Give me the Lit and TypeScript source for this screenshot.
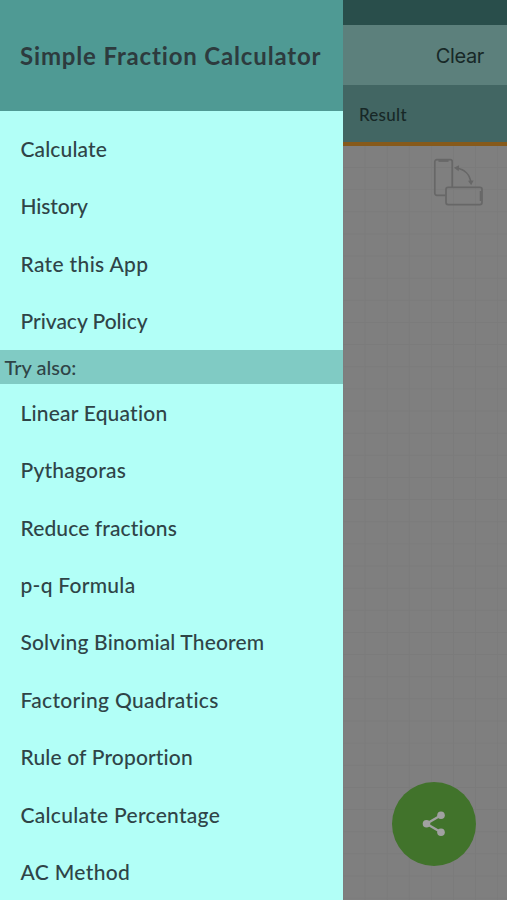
import { LitElement, html, css } from "lit";
import { customElement } from "lit/decorators.js";

interface Entry {
  label: string;
  spacing: number;
}

const MAIN: Entry[] = [
  { label: "Calculate", spacing: 0.12 },
  { label: "History", spacing: -0.14 },
  { label: "Rate this App", spacing: 0.34 },
  { label: "Privacy Policy", spacing: -0.02 },
];

const MORE: Entry[] = [
  { label: "Linear Equation", spacing: 0.2 },
  { label: "Pythagoras", spacing: 0.22 },
  { label: "Reduce fractions", spacing: 0.12 },
  { label: "p-q Formula", spacing: 0.27 },
  { label: "Solving Binomial Theorem", spacing: 0.15 },
  { label: "Factoring Quadratics", spacing: 0.32 },
  { label: "Rule of Proportion", spacing: 0.15 },
  { label: "Calculate Percentage", spacing: 0.29 },
  { label: "AC Method", spacing: 0.34 },
];

@customElement("nav-drawer")
export class NavDrawer extends LitElement {
  static styles = css`
    :host {
      display: flex;
      flex-direction: column;
      width: 343.4px;
      flex: none;
      background: #b2fff7;
      color: #2f4447;
      font: 500 21px/24px Lato, sans-serif;
      overflow: hidden;
    }
    .header {
      box-sizing: border-box;
      height: 110.6px;
      flex: none;
      display: flex;
      align-items: center;
      padding: 1px 0 0 20px;
      background: #4f9a94;
      color: #2d3b3e;
      font-weight: 700;
      font-size: 24px;
      letter-spacing: 0.84px;
      white-space: nowrap;
    }
    .items {
      flex: none;
    }
    .main {
      padding-top: 9.6px;
    }
    .item {
      display: flex;
      align-items: center;
      height: 57.4px;
      padding-left: 20.5px;
      white-space: nowrap;
    }
    .section {
      height: 34.4px;
      flex: none;
      display: flex;
      align-items: center;
      padding-left: 4.5px;
      background: #80cbc4;
      font-size: 20px;
    }
  `;

  private item(e: Entry) {
    return html`<div class="item" style="letter-spacing:${e.spacing}px">${e.label}</div>`;
  }

  render() {
    return html`
      <div class="header">Simple Fraction Calculator</div>
      <div class="items main">${MAIN.map((e) => this.item(e))}</div>
      <div class="section">Try also:</div>
      <div class="items">${MORE.map((e) => this.item(e))}</div>
    `;
  }
}

@customElement("app-root")
export class AppRoot extends LitElement {
  static styles = css`
    :host {
      display: flex;
      height: 900px;
      overflow: hidden;
      background: #7f7f7f;
    }
    .page {
      flex: 1;
      display: flex;
      flex-direction: column;
    }
    .status {
      height: 25px;
      background: #294e4b;
    }
    .bar {
      box-sizing: border-box;
      height: 60px;
      display: flex;
      align-items: center;
      justify-content: flex-end;
      padding: 1px 23px 0 0;
      background: #5c807c;
      color: #172827;
      font: 400 20px Inter, sans-serif;
      letter-spacing: -0.38px;
    }
    .tab {
      box-sizing: border-box;
      height: 60.5px;
      display: flex;
      align-items: center;
      padding: 3px 0 0 15.5px;
      border-bottom: 4px solid #865a1b;
      background: #426663;
      color: #172827;
      font: 500 17px Lato, sans-serif;
      letter-spacing: 0.28px;
    }
    .sheet {
      flex: 1;
      display: flex;
      flex-direction: column;
      justify-content: space-between;
      align-items: flex-end;
      background-color: #7f7f7f;
      background-image: linear-gradient(90deg, #7b7b7b 1px, transparent 1px),
        linear-gradient(#7b7b7b 1px, transparent 1px);
      background-size: 22.1px 22.15px;
      background-position: 21.6px 21px;
    }
    .rotate {
      width: 52px;
      height: 50px;
      margin: 12px 23.5px 0 0;
    }
    .fab {
      width: 84px;
      height: 84px;
      margin: 0 31.5px 33.6px 0;
      border-radius: 50%;
      background: #41732b;
      display: flex;
      align-items: center;
      justify-content: center;
    }
    .share {
      width: 24px;
      height: 26px;
    }
  `;

  render() {
    return html`
      <nav-drawer></nav-drawer>
      <div class="page">
        <div class="status"></div>
        <div class="bar">Clear</div>
        <div class="tab">Result</div>
        <div class="sheet">
          <svg class="rotate" viewBox="0 0 52 50" fill="none" stroke="#676767" stroke-width="1.7">
            <path d="M13.5 37.3H4.8a2 2 0 0 1-2-2V3.7a2 2 0 0 1 2-2h13.4a2 2 0 0 1 2 2v25.6" />
            <path d="M6.5 3h10" />
            <rect x="14" y="29.3" width="36" height="17.3" rx="2" />
            <path d="M48.6 33v10" />
            <path d="M24.5 10.2C33 11.4 38 17 38.8 24.5" />
            <path d="M21.9 9.7l5.2-2.5-.4 6zM39.2 27.2l-3.2-4.4 5.6-.4z" fill="#676767" stroke="none" />
          </svg>
          <div class="fab">
            <svg class="share" viewBox="0 0 24 26" fill="#a1a1a1" stroke="#a1a1a1">
              <path d="M19 4.3L4.5 12.7 19 21.2" fill="none" stroke-width="2.3" />
              <g stroke="none">
                <circle cx="19" cy="4.3" r="3.8" />
                <circle cx="4.5" cy="12.7" r="3.8" />
                <circle cx="19" cy="21.2" r="3.8" />
              </g>
            </svg>
          </div>
        </div>
      </div>
    `;
  }
}
